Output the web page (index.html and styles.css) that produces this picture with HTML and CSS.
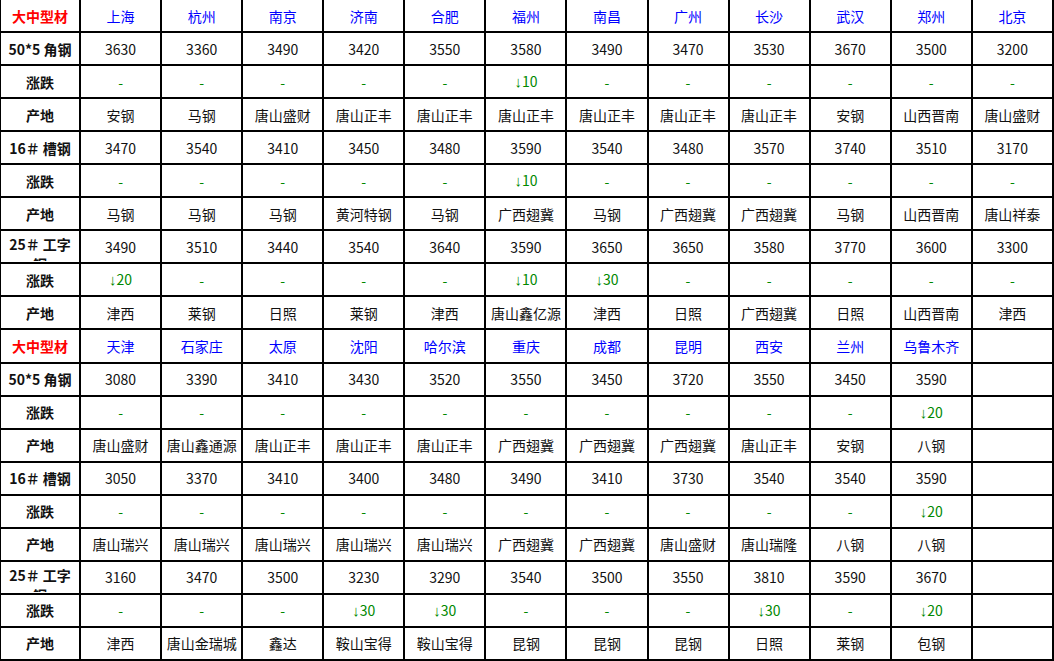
FILE: index.html
```html
<!DOCTYPE html>
<html lang="zh-CN">
<head>
<meta charset="utf-8">
<title>大中型材价格</title>
<link rel="stylesheet" href="styles.css">
</head>
<body>
<table class="grid">
<tr><td class="lab hd">大中型材</td><td class="city">上海</td><td class="city">杭州</td><td class="city">南京</td><td class="city">济南</td><td class="city">合肥</td><td class="city">福州</td><td class="city">南昌</td><td class="city">广州</td><td class="city">长沙</td><td class="city">武汉</td><td class="city">郑州</td><td class="city">北京</td></tr>
<tr><td class="lab">50*5 角钢</td><td>3630</td><td>3360</td><td>3490</td><td>3420</td><td>3550</td><td>3580</td><td>3490</td><td>3470</td><td>3530</td><td>3670</td><td>3500</td><td>3200</td></tr>
<tr><td class="lab">涨跌</td><td class="chg">-</td><td class="chg">-</td><td class="chg">-</td><td class="chg">-</td><td class="chg">-</td><td class="chg"><span class="arw">↓</span>10</td><td class="chg">-</td><td class="chg">-</td><td class="chg">-</td><td class="chg">-</td><td class="chg">-</td><td class="chg">-</td></tr>
<tr><td class="lab">产地</td><td>安钢</td><td>马钢</td><td>唐山盛财</td><td>唐山正丰</td><td>唐山正丰</td><td>唐山正丰</td><td>唐山正丰</td><td>唐山正丰</td><td>唐山正丰</td><td>安钢</td><td>山西晋南</td><td>唐山盛财</td></tr>
<tr><td class="lab">16＃ 槽钢</td><td>3470</td><td>3540</td><td>3410</td><td>3450</td><td>3480</td><td>3590</td><td>3540</td><td>3480</td><td>3570</td><td>3740</td><td>3510</td><td>3170</td></tr>
<tr><td class="lab">涨跌</td><td class="chg">-</td><td class="chg">-</td><td class="chg">-</td><td class="chg">-</td><td class="chg">-</td><td class="chg"><span class="arw">↓</span>10</td><td class="chg">-</td><td class="chg">-</td><td class="chg">-</td><td class="chg">-</td><td class="chg">-</td><td class="chg">-</td></tr>
<tr><td class="lab">产地</td><td>马钢</td><td>马钢</td><td>马钢</td><td>黄河特钢</td><td>马钢</td><td>广西翅冀</td><td>马钢</td><td>广西翅冀</td><td>广西翅冀</td><td>马钢</td><td>山西晋南</td><td>唐山祥泰</td></tr>
<tr><td class="lab"><div class="clip">25＃ 工字钢</div></td><td>3490</td><td>3510</td><td>3440</td><td>3540</td><td>3640</td><td>3590</td><td>3650</td><td>3650</td><td>3580</td><td>3770</td><td>3600</td><td>3300</td></tr>
<tr><td class="lab">涨跌</td><td class="chg"><span class="arw">↓</span>20</td><td class="chg">-</td><td class="chg">-</td><td class="chg">-</td><td class="chg">-</td><td class="chg"><span class="arw">↓</span>10</td><td class="chg"><span class="arw">↓</span>30</td><td class="chg">-</td><td class="chg">-</td><td class="chg">-</td><td class="chg">-</td><td class="chg">-</td></tr>
<tr><td class="lab">产地</td><td>津西</td><td>莱钢</td><td>日照</td><td>莱钢</td><td>津西</td><td>唐山鑫亿源</td><td>津西</td><td>日照</td><td>广西翅冀</td><td>日照</td><td>山西晋南</td><td>津西</td></tr>
<tr><td class="lab hd">大中型材</td><td class="city">天津</td><td class="city">石家庄</td><td class="city">太原</td><td class="city">沈阳</td><td class="city">哈尔滨</td><td class="city">重庆</td><td class="city">成都</td><td class="city">昆明</td><td class="city">西安</td><td class="city">兰州</td><td class="city">乌鲁木齐</td><td></td></tr>
<tr><td class="lab">50*5 角钢</td><td>3080</td><td>3390</td><td>3410</td><td>3430</td><td>3520</td><td>3550</td><td>3450</td><td>3720</td><td>3550</td><td>3450</td><td>3590</td><td></td></tr>
<tr><td class="lab">涨跌</td><td class="chg">-</td><td class="chg">-</td><td class="chg">-</td><td class="chg">-</td><td class="chg">-</td><td class="chg">-</td><td class="chg">-</td><td class="chg">-</td><td class="chg">-</td><td class="chg">-</td><td class="chg"><span class="arw">↓</span>20</td><td></td></tr>
<tr><td class="lab">产地</td><td>唐山盛财</td><td>唐山鑫通源</td><td>唐山正丰</td><td>唐山正丰</td><td>唐山正丰</td><td>广西翅冀</td><td>广西翅冀</td><td>广西翅冀</td><td>唐山正丰</td><td>安钢</td><td>八钢</td><td></td></tr>
<tr><td class="lab">16＃ 槽钢</td><td>3050</td><td>3370</td><td>3410</td><td>3400</td><td>3480</td><td>3490</td><td>3410</td><td>3730</td><td>3540</td><td>3540</td><td>3590</td><td></td></tr>
<tr><td class="lab">涨跌</td><td class="chg">-</td><td class="chg">-</td><td class="chg">-</td><td class="chg">-</td><td class="chg">-</td><td class="chg">-</td><td class="chg">-</td><td class="chg">-</td><td class="chg">-</td><td class="chg">-</td><td class="chg"><span class="arw">↓</span>20</td><td></td></tr>
<tr><td class="lab">产地</td><td>唐山瑞兴</td><td>唐山瑞兴</td><td>唐山瑞兴</td><td>唐山瑞兴</td><td>唐山瑞兴</td><td>广西翅冀</td><td>广西翅冀</td><td>唐山盛财</td><td>唐山瑞隆</td><td>八钢</td><td>八钢</td><td></td></tr>
<tr><td class="lab"><div class="clip">25＃ 工字钢</div></td><td>3160</td><td>3470</td><td>3500</td><td>3230</td><td>3290</td><td>3540</td><td>3500</td><td>3550</td><td>3810</td><td>3590</td><td>3670</td><td></td></tr>
<tr><td class="lab">涨跌</td><td class="chg">-</td><td class="chg">-</td><td class="chg">-</td><td class="chg"><span class="arw">↓</span>30</td><td class="chg"><span class="arw">↓</span>30</td><td class="chg">-</td><td class="chg">-</td><td class="chg">-</td><td class="chg"><span class="arw">↓</span>30</td><td class="chg">-</td><td class="chg"><span class="arw">↓</span>20</td><td></td></tr>
<tr><td class="lab">产地</td><td>津西</td><td>唐山金瑞城</td><td>鑫达</td><td>鞍山宝得</td><td>鞍山宝得</td><td>昆钢</td><td>昆钢</td><td>昆钢</td><td>日照</td><td>莱钢</td><td>包钢</td><td></td></tr>
</table>
</body>
</html>
```

FILE: styles.css
```css
html, body {
  margin: 0;
  padding: 0;
  background: #ffffff;
}

body {
  font-family: "Noto Sans CJK SC", "Noto Sans", sans-serif;
  font-size: 14px;
  color: #111111;
  overflow: hidden;
}

.grid {
  border-collapse: separate;
  border-spacing: 0;
  table-layout: fixed;
  width: 1054px;
  height: 661px;
}

.grid td {
  border-right: 2px solid #000000;
  border-bottom: 2px solid #000000;
  text-align: center;
  vertical-align: middle;
  padding: 0 1px;
  height: 31px;
  line-height: 20px;
  white-space: normal;
  overflow: hidden;
}

.grid td:first-child {
  border-left: 1px solid #000000;
}

.lab {
  font-weight: bold;
  color: #111111;
}

.hd {
  color: #ff0000;
}

.city {
  color: #0000ff;
}

.chg {
  color: #008800;
}

.arw {
  font-family: "Liberation Sans", "DejaVu Sans", sans-serif;
  font-size: 15px;
}

.clip {
  height: 29px;
  overflow: hidden;
  padding: 2px 5px 0;
  box-sizing: border-box;
  line-height: 20px;
  text-align: center;
}
```
